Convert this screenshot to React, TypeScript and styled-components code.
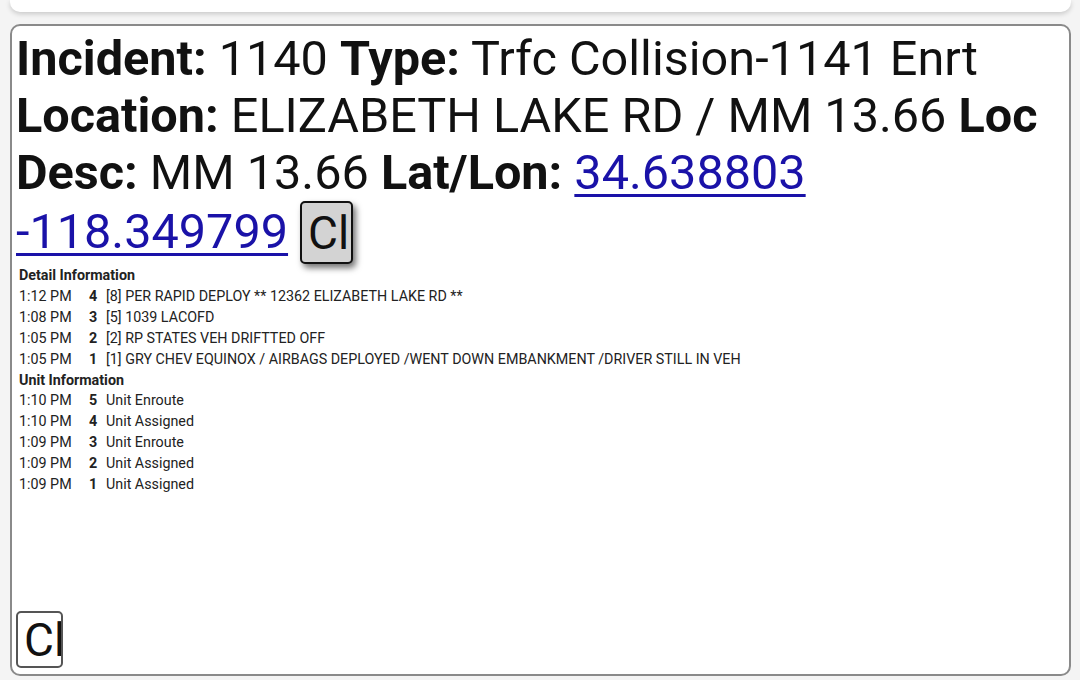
import styled, { createGlobalStyle } from "styled-components";

const GlobalStyle = createGlobalStyle`
  html, body {
    margin: 0;
    padding: 0;
    background: #f4f4f4;
    font-family: Roboto, "Liberation Sans", sans-serif;
    color: #222;
  }
`;

const Page = styled.div`
  display: flex;
  flex-direction: column;
  gap: 12px;
  padding: 0 9px 0 10px;
  height: 680px;
  box-sizing: border-box;
`;

const TopCard = styled.div`
  height: 12px;
  background: #fff;
  border-radius: 0 0 10px 10px;
  box-shadow: 0 2px 5px rgba(0, 0, 0, 0.18);
`;

const Panel = styled.section`
  height: 652px;
  box-sizing: border-box;
  background: #fff;
  border: 2px solid #8a8a8a;
  border-radius: 10px;
  padding: 4px 6px 6px 4px;
  display: flex;
  flex-direction: column;
`;

const Heading = styled.div`
  font-size: 48.6px;
  line-height: 57px;
  color: #111;

  b {
    font-weight: 700;
  }

  a {
    color: #1a12a8;
    text-decoration: underline;
    text-decoration-thickness: 3px;
    text-underline-offset: 5px;
  }
`;

const CloseButton = styled.button<{ $raised?: boolean }>`
  font-family: Roboto, "Liberation Sans", sans-serif;
  font-size: 46px;
  line-height: 50px;
  width: ${(p) => (p.$raised ? "53px" : "47px")};
  height: ${(p) => (p.$raised ? "63px" : "57px")};
  padding: 0 0 0 6px;
  text-align: left;
  overflow: hidden;
  white-space: nowrap;
  color: #111;
  background: ${(p) => (p.$raised ? "#d3d3d3" : "#fff")};
  border: 2px solid ${(p) => (p.$raised ? "#111" : "#555")};
  border-radius: 5px;
  box-shadow: ${(p) => (p.$raised ? "3px 4px 6px rgba(0,0,0,0.55)" : "none")};
  vertical-align: -1px;
  box-sizing: border-box;
`;

const Section = styled.div`
  font-size: 14.3px;
  line-height: 20.9px;
  padding-left: 3px;
  margin-top: 1px;
`;

const SectionTitle = styled.div`
  font-weight: 700;
  color: #222;
`;

const Row = styled.div`
  display: grid;
  grid-template-columns: 70px 17px auto;
  color: #222;
`;

const Num = styled.span`
  font-weight: 700;
`;

const Bottom = styled.div`
  margin-top: auto;
`;

const details = [
  ["1:12 PM", "4", "[8] PER RAPID DEPLOY ** 12362 ELIZABETH LAKE RD **"],
  ["1:08 PM", "3", "[5] 1039 LACOFD"],
  ["1:05 PM", "2", "[2] RP STATES VEH DRIFTTED OFF"],
  [
    "1:05 PM",
    "1",
    "[1] GRY CHEV EQUINOX / AIRBAGS DEPLOYED /WENT DOWN EMBANKMENT /DRIVER STILL IN VEH",
  ],
];

const units = [
  ["1:10 PM", "5", "Unit Enroute"],
  ["1:10 PM", "4", "Unit Assigned"],
  ["1:09 PM", "3", "Unit Enroute"],
  ["1:09 PM", "2", "Unit Assigned"],
  ["1:09 PM", "1", "Unit Assigned"],
];

export default function App() {
  return (
    <>
      <GlobalStyle />
      <Page>
        <TopCard />
        <Panel>
          <Heading>
            <b>Incident:</b> 1140 <b>Type:</b> Trfc Collision-1141 Enrt{" "}
            <b>Location:</b> ELIZABETH LAKE RD / MM 13.66 <b>Loc Desc:</b> MM
            13.66 <b>Lat/Lon:</b> <a href="#">34.638803 -118.349799</a>{" "}
            <CloseButton $raised>Close</CloseButton>
          </Heading>
          <Section>
            <SectionTitle>Detail Information</SectionTitle>
            {details.map(([t, n, d], i) => (
              <Row key={i}>
                <span>{t}</span>
                <Num>{n}</Num>
                <span>{d}</span>
              </Row>
            ))}
            <SectionTitle>Unit Information</SectionTitle>
            {units.map(([t, n, d], i) => (
              <Row key={i}>
                <span>{t}</span>
                <Num>{n}</Num>
                <span>{d}</span>
              </Row>
            ))}
          </Section>
          <Bottom>
            <CloseButton>Close</CloseButton>
          </Bottom>
        </Panel>
      </Page>
    </>
  );
}
